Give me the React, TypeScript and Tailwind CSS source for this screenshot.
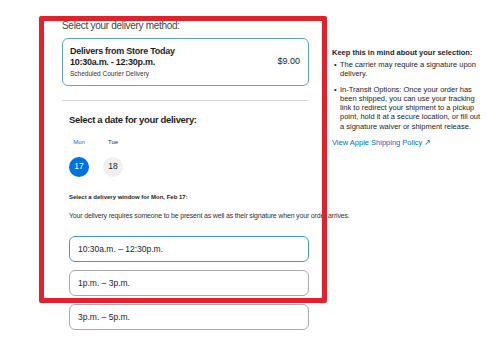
import React from 'react';

const timeWindows = ['10:30a.m. – 12:30p.m.', '1p.m. – 3p.m.', '3p.m. – 5p.m.'];

const days = [
  { label: 'Mon', date: '17', selected: true },
  { label: 'Tue', date: '18', selected: false },
];

export default function App() {
  return (
    <div className="relative h-[361px] w-[496px] overflow-hidden bg-white font-['Liberation_Sans',Arial,sans-serif] text-[#1d1d1f]">
      <div className="flex items-start pl-[62px] pt-[20px]">
        {/* left: delivery method + date */}
        <div className="flex w-[247px] flex-col">
          <p className="text-[10px] leading-[12px] tracking-[-0.03em] text-[#444]">Select your delivery method:</p>

          <div className="mt-[6px] flex items-center justify-between rounded-[6px] border border-[#5a9fe8] py-[7px] pl-[7px] pr-[8px]">
            <div>
              <p className="text-[9px] font-bold leading-[11px] tracking-[-0.03em]">Delivers from Store Today</p>
              <p className="text-[9px] font-bold leading-[11px] tracking-[-0.03em]">10:30a.m. - 12:30p.m.</p>
              <p className="mt-[1.5px] text-[6.5px] leading-[8px] text-[#333]">Scheduled Courier Delivery</p>
            </div>
            <span className="text-[9px] text-[#1d1d1f]">$9.00</span>
          </div>

          <div className="mt-[14px] h-px bg-[#dadada]" />

          <div className="pl-[7px] pt-[13.5px]">
            <h2 className="text-[9.5px] font-bold leading-[12px] tracking-[-0.035em]">Select a date for your delivery:</h2>

            <div className="mt-[11.5px] flex gap-[14px]">
              {days.map((d) => (
                <div key={d.label} className="flex w-[20px] flex-col items-center">
                  <span className={`text-[6px] leading-[8px] ${d.selected ? 'text-[#0071e3]' : 'text-[#333]'}`}>{d.label}</span>
                  <span
                    className={`mt-[11px] flex h-[20px] w-[20px] items-center justify-center rounded-full text-[8.5px] ${
                      d.selected ? 'bg-[#0071e3] text-white' : 'bg-[#f0f0f0] text-[#1d1d1f]'
                    }`}
                  >
                    {d.date}
                  </span>
                </div>
              ))}
            </div>

            <p className="mt-[16px] text-[6px] font-bold leading-[8px] text-[#1d1d1f]">Select a delivery window for Mon, Feb 17:</p>
            <p className="mt-[10px] whitespace-nowrap text-[7px] leading-[9px] tracking-[-0.025em] text-[#333]">
              Your delivery requires someone to be present as well as their signature when your order arrives.
            </p>

            <div className="mt-[16.5px] flex flex-col gap-[8px]">
              {timeWindows.map((w, i) => (
                <div
                  key={w}
                  className={`flex h-[26px] items-center rounded-[6px] border pl-[8px] text-[8.5px] text-[#1d1d1f] ${
                    i === 0 ? 'border-[#4a95e9]' : 'border-[#ababab]'
                  }`}
                >
                  {w}
                </div>
              ))}
            </div>
          </div>
        </div>

        {/* right: notes */}
        <div className="ml-[23px] mt-[27.5px] w-[152px] text-[7.5px] text-[#1d1d1f]">
          <p className="font-bold leading-[10px]">Keep this in mind about your selection:</p>
          <ul className="mt-[2.5px] flex flex-col gap-[6px] leading-[9.3px]">
            <li className="flex">
              <span className="w-[8px] shrink-0 pl-[2px]">•</span>
              <span>The carrier may require a signature upon delivery.</span>
            </li>
            <li className="flex">
              <span className="w-[8px] shrink-0 pl-[2px]">•</span>
              <span>
                In-Transit Options: Once your order has been shipped, you can use your tracking link to redirect your shipment
                to a pickup point, hold it at a secure location, or fill out a signature waiver or shipment release.
              </span>
            </li>
          </ul>
          <p className="mt-[7px] leading-[9.3px] text-[#0070c9]">View Apple Shipping Policy ↗</p>
        </div>
      </div>

      {/* annotation overlay */}
      <div className="pointer-events-none absolute left-[39px] top-[16px] h-[287px] w-[288px] rounded-[2px] border-[5px] border-[#e4202a]" />
    </div>
  );
}
